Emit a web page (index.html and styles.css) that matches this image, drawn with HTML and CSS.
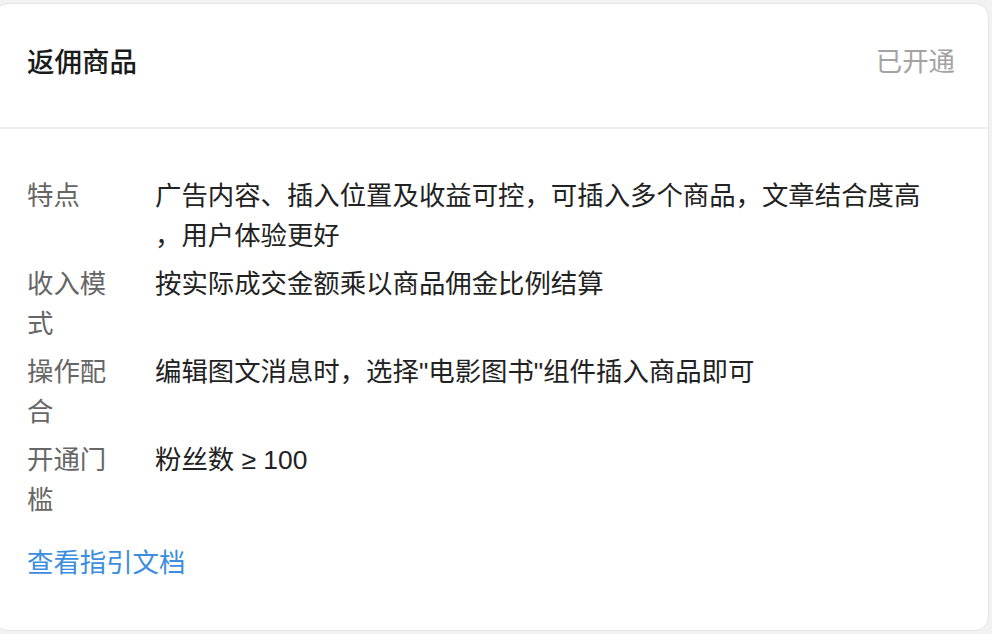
FILE: index.html
```html
<!DOCTYPE html>
<html lang="zh-CN">
<head>
<meta charset="utf-8">
<title>返佣商品</title>
<link rel="stylesheet" href="styles.css">
</head>
<body>
<div class="card">
  <div class="card-header">
    <div class="card-title">返佣商品</div>
    <div class="card-status">已开通</div>
  </div>
  <div class="card-body">
    <dl class="info">
      <div class="info-row">
        <dt class="info-label">特点</dt>
        <dd class="info-value">广告内容、插入位置及收益可控，可插入多个商品，文章结合度高，用户体验更好</dd>
      </div>
      <div class="info-row">
        <dt class="info-label">收入模式</dt>
        <dd class="info-value">按实际成交金额乘以商品佣金比例结算</dd>
      </div>
      <div class="info-row">
        <dt class="info-label">操作配合</dt>
        <dd class="info-value">编辑图文消息时，选择"电影图书"组件插入商品即可</dd>
      </div>
      <div class="info-row">
        <dt class="info-label">开通门槛</dt>
        <dd class="info-value">粉丝数 ≥ 100</dd>
      </div>
    </dl>
    <a class="guide-link" href="#">查看指引文档</a>
  </div>
</div>
</body>
</html>
```

FILE: styles.css
```css
html, body {
  margin: 0;
  padding: 0;
}

body {
  background: #f2f2f3;
  font-family: "Liberation Sans", "Noto Sans CJK SC", sans-serif;
  width: 992px;
  height: 634px;
  overflow: hidden;
}

.card {
  box-sizing: border-box;
  margin: 3px 0 0 -6px;
  width: 995px;
  height: 628px;
  background: #ffffff;
  border: 1px solid #e4e4e6;
  border-radius: 14px;
}

.card-header {
  display: flex;
  justify-content: space-between;
  align-items: center;
  padding: 36px 33px 47px 32px;
  border-bottom: 2px solid #ededee;
  line-height: 40px;
}

.card-title {
  font-family: "Noto Sans CJK SC", sans-serif;
  font-size: 27.5px;
  font-weight: 500;
  color: #1b1b1b;
}

.card-status {
  font-family: "Noto Sans CJK SC", sans-serif;
  font-size: 26.4px;
  color: #a3a3a3;
}

.card-body {
  padding: 47px 60px 0 32px;
}

.info {
  margin: 0;
  display: flex;
  flex-direction: column;
  gap: 8px;
}

.info-row {
  display: grid;
  grid-template-columns: 100px 1fr;
  column-gap: 28px;
  min-height: 80px;
  font-size: 26.4px;
  line-height: 40px;
}

.info-label {
  margin: 0;
  color: #666666;
}

.info-value {
  margin: 0;
  color: #222222;
  line-break: anywhere;
  word-break: break-all;
}

.guide-link {
  display: block;
  margin-top: 23px;
  font-size: 26.4px;
  line-height: 40px;
  color: #3b8de0;
  text-decoration: none;
}
```
